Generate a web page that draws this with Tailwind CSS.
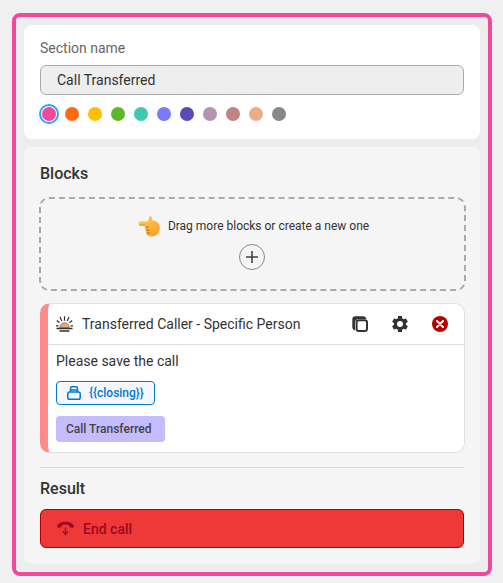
<!DOCTYPE html>
<html lang="en">
<head>
<meta charset="utf-8">
<script src="https://cdn.jsdelivr.net/npm/@tailwindcss/browser@4"></script>
</head>
<body class="w-[503px] h-[583px] overflow-hidden bg-[#f0f0f0] pt-[13px] pl-[12px] font-['Roboto',sans-serif]">
<div class="w-[480px] h-[563px] border-4 border-[#f0489a] rounded-[8px] bg-[#ededed] p-2 flex flex-col gap-2">
  <section class="h-[114px] shrink-0 bg-white rounded-[8px] px-4 pt-[15px]">
    <div class="text-sm leading-4 text-[#666]">Section name</div>
    <div class="mt-[9px] h-[30px] bg-[#eeeeee] border border-[#aaa] rounded-[6px] pl-4 flex items-center text-sm text-[#333]">Call Transferred</div>
    <div class="mt-[12px] flex items-center gap-[9px] pl-[2px]">
      <span class="size-[14px] rounded-full bg-[#f0489a] outline-2 outline-offset-[1px] outline-[#31a0ff]"></span>
      <span class="size-[14px] rounded-full bg-[#ff6a13]"></span>
      <span class="size-[14px] rounded-full bg-[#ffbf00]"></span>
      <span class="size-[14px] rounded-full bg-[#5cb82a]"></span>
      <span class="size-[14px] rounded-full bg-[#40c9aa]"></span>
      <span class="size-[14px] rounded-full bg-[#7a7aff]"></span>
      <span class="size-[14px] rounded-full bg-[#5b4ab5]"></span>
      <span class="size-[14px] rounded-full bg-[#b394ae]"></span>
      <span class="size-[14px] rounded-full bg-[#bf8582]"></span>
      <span class="size-[14px] rounded-full bg-[#edab8a]"></span>
      <span class="size-[14px] rounded-full bg-[#888888]"></span>
    </div>
  </section>
  <section class="flex-1 bg-[#f5f5f5] rounded-[8px] px-4 pt-[18px]">
    <h2 class="text-base leading-[18px] font-medium text-[#333]">Blocks</h2>
    <div class="mt-[14px] -mx-px w-[427px] h-[94px] rounded-[10px] border-2 border-dashed border-[#aaa] flex flex-col items-center pt-[15px]">
      <div class="flex items-center gap-[8px] h-[24px] pl-[2px]">
        <svg width="22" height="21" viewBox="0 0 22 21">
          <defs><linearGradient id="h" x1="0" y1="0" x2="1" y2="1"><stop offset="0" stop-color="#ffd54a"/><stop offset="1" stop-color="#f79a28"/></linearGradient></defs>
          <path d="M.5 7.500 C.5 6 1.500 5.500 3 5.500 L9.500 5.500 C10.500 4 11 2.500 11 1.200 C11.500 -.2 13.500 .2 14 1.500 L14.500 4.500 C18.500 4.500 21.800 7.500 21.800 12 C21.800 17 18 20.500 13.500 20.500 C11 20.500 9 19.500 8.500 18 L7.500 14 L6.500 9.800 L3 9.800 C1.500 9.800 .5 9 .5 7.500 Z" fill="url(#h)"/>
          <path d="M8 11 H10.500 M8.500 14 H11 M9 17 H11.500" stroke="#b84f18" stroke-width="1"/>
          <path d="M1.500 9 H7" stroke="#ef8a24" stroke-width="1.200"/>
        </svg>
        <span class="text-xs leading-4 text-[#333]">Drag more blocks or create a new one</span>
      </div>
      <div class="mt-[6px] mr-[1px] size-[26px] rounded-full border border-[#888] flex items-center justify-center">
        <svg width="14" height="14" viewBox="0 0 14 14"><path d="M7 1V13M1 7H13" stroke="#444" stroke-width="1.600"/></svg>
      </div>
    </div>
    <article class="mt-3 w-[425px] h-[150px] bg-white border border-[#e0e0e0] border-l-[8px] border-l-[#ff8a8a] rounded-[10px] overflow-hidden">
      <header class="h-[41px] border-b border-[#dedede] flex items-center pl-[8px] text-sm text-[#333]">
        <svg width="17" height="17" viewBox="0 0 17 17" fill="none" class="mr-[9px] shrink-0">
          <path d="M3.800 11.500 A4.700 4.700 0 0 1 13.200 11.500 Z" fill="#f2a27c" stroke="#555" stroke-width=".6"/>
          <path d="M8.500 .3V4.800M4 1L5.800 5M13 1L11.200 5M.8 4.500L3.500 6.800M16.200 4.500L13.500 6.800M0 9.800H2.500M14.500 9.800H17" stroke="#333" stroke-width="1.200"/>
          <path d="M.5 12.500H16.500M3.500 15H13.500" stroke="#333" stroke-width="1.500"/>
        </svg>
        <span>Transferred Caller - Specific Person</span>
        <div class="ml-auto flex items-center">
          <svg width="16" height="16" viewBox="0 0 16 16" class="mr-[22px]">
            <path d="M3.500 .3 H11 C12.800 .3 14 1.300 14.300 3 H6.500 C4.500 3 3 4.500 3 6.500 V14.300 C1.300 14 .3 12.800 .3 11 V3.500 C.3 1.500 1.500 .3 3.500 .3 Z" fill="#333"/>
            <rect x="4.600" y="4.300" width="10.400" height="10.700" rx="2.200" fill="#fff" stroke="#333" stroke-width="2"/>
          </svg>
          <svg width="20" height="20" viewBox="0 0 24 24" class="mr-[22px]">
            <path fill="#333" d="M19.140 12.940c.04-.3.060-.61.060-.94 0-.32-.02-.64-.07-.94l2.030-1.580a.49.49 0 0 0 .12-.61l-1.920-3.320a.49.49 0 0 0-.59-.22l-2.390.96c-.5-.38-1.030-.7-1.620-.94l-.36-2.540a.48.48 0 0 0-.48-.41h-3.840c-.24 0-.43.170-.47.410l-.36 2.540c-.59.240-1.130.57-1.620.94l-2.390-.96a.49.49 0 0 0-.59.220L2.740 8.870c-.12.210-.08.470.12.610l2.030 1.580c-.05.3-.09.630-.09.940s.02.640.07.940l-2.030 1.580a.49.49 0 0 0-.12.610l1.920 3.320c.12.220.37.290.59.220l2.390-.96c.5.380 1.030.7 1.620.94l.36 2.540c.05.240.24.410.48.410h3.840c.24 0 .44-.17.47-.41l.36-2.540c.59-.24 1.130-.56 1.620-.94l2.390.96c.22.080.47 0 .59-.22l1.920-3.320c.12-.22.070-.47-.12-.61l-2.010-1.580zM12 15.600A3.600 3.600 0 1 1 12 8.400a3.600 3.600 0 0 1 0 7.200z"/>
          </svg>
          <svg width="16" height="16" viewBox="0 0 16 16" class="mr-[16px]">
            <circle cx="8" cy="8" r="8" fill="#b30000"/>
            <path d="M5 5L11 11M11 5L5 11" stroke="#fff" stroke-width="2" stroke-linecap="round"/>
          </svg>
        </div>
      </header>
      <div class="pl-[8px] pt-[7px]">
        <p class="text-sm leading-[18px] text-[#333]">Please save the call</p>
        <div class="mt-[11px] w-[99px] h-[24px] border border-[#0078d4] rounded-[4px] bg-[#f5f7fa] flex items-center pl-[10px] gap-[8px]">
          <svg width="14" height="14" viewBox="0 0 14 14" fill="none" stroke="#0078d4" stroke-width="1.500" class="shrink-0">
            <path d="M3.500 6V2.500C3.500 1.500 4 .8 5 .8H9C10 .8 10.500 1.500 10.500 2.500V6"/>
            <rect x=".8" y="6" width="12.400" height="7.200" rx="1.800"/>
            <path d="M3.500 4H10.500"/>
          </svg>
          <span class="text-xs font-medium text-[#0078d4] whitespace-nowrap">{{closing}}</span>
        </div>
        <div class="mt-[11px] w-[109px] h-[26px] bg-[#c4bcff] rounded-[4px] flex items-center pl-[10px] text-xs font-medium text-[#444]">Call Transferred</div>
      </div>
    </article>
    <hr class="mt-[14px] border-t border-[#dedede]">
    <h2 class="mt-3 text-base leading-[18px] font-medium text-[#333]">Result</h2>
    <div class="mt-[11px] h-[39px] bg-[#ef3838] border border-[#b30000] rounded-[6px] flex items-center pl-4 gap-[9px] text-sm font-medium text-[#960a20]">
      <svg width="17" height="15" viewBox="0 0 17 15" fill="#960a20" class="shrink-0">
        <path d="M.2 5.500C.2 3 4 .8 8.500 .8S16.800 3 16.800 5.500L16.800 6C16.800 6.600 16.300 6.900 15.800 6.800L13 6.200C12.500 6.100 12.300 5.700 12.300 5.200L12.200 4C10 3.300 7 3.300 4.800 4L4.700 5.200C4.700 5.700 4.500 6.100 4 6.200L1.200 6.800C.7 6.900 .2 6.600 .2 6Z"/>
        <path d="M8.500 6.500V12.500M6 10.500L8.500 13.500L11 10.500" fill="none" stroke="#960a20" stroke-width="1.200"/>
      </svg>
      <span>End call</span>
    </div>
  </section>
</div>
</body>
</html>
